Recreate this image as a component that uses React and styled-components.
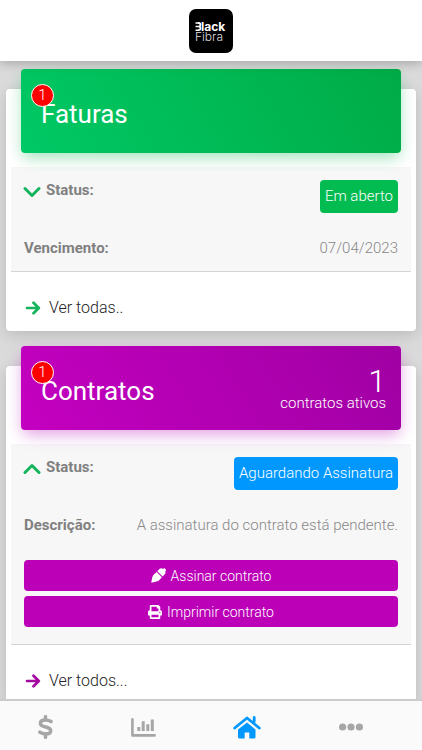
import styled, { createGlobalStyle } from 'styled-components'
import { FaPrint } from 'react-icons/fa'

const GlobalStyle = createGlobalStyle`
  * {
    box-sizing: border-box;
  }
  html, body, #root {
    height: 100%;
    margin: 0;
  }
  body {
    font-family: Roboto, "Liberation Sans", sans-serif;
    font-weight: 300;
    font-size: 15px;
    line-height: 20px;
    color: #888;
  }
  button {
    font: inherit;
    border: none;
    cursor: pointer;
  }
`

const StyledApp = styled.div`
  height: 100%;
  display: flex;
  flex-direction: column;
  background: #dadada;
`

const StyledHeader = styled.header`
  flex: none;
  height: 61px;
  display: flex;
  align-items: center;
  justify-content: center;
  background: white;
  box-shadow: 0 2px 10px rgba(0, 0, 0, 0.25);
  z-index: 1;
`

const StyledLogo = styled.svg`
  width: 44px;
  height: 44px;
  font-family: Inter, Roboto, sans-serif;
`

const StyledMain = styled.main`
  flex: 1;
  min-height: 0;
  overflow: hidden;
  padding: 28px 6px 0;
`

const StyledCard = styled.section`
  background: white;
  border-radius: 4px;
  box-shadow: 0 4px 14px rgba(0, 0, 0, 0.14);
  padding: 0 5px;
  margin-bottom: 35px;
`

const StyledBanner = styled.div`
  position: relative;
  top: -20px;
  height: 84px;
  margin: 0 10px -6px;
  padding: 6px 15px 0 20px;
  display: flex;
  align-items: center;
  justify-content: space-between;
  border-radius: 4px;
  color: white;
  background: linear-gradient(60deg, ${({$from}) => $from}, ${({$to}) => $to});
  box-shadow: 0 6px 16px -2px ${({$glow}) => $glow};
`

const StyledTitle = styled.h2`
  margin: 0;
  font-size: 26px;
  line-height: 32px;
  font-weight: 400;
`

const StyledBadge = styled.span`
  position: absolute;
  top: 15px;
  left: 10px;
  width: 23px;
  height: 23px;
  border: white 1px solid;
  border-radius: 50%;
  background: #fe0000;
  line-height: 21px;
  text-align: center;
`

const StyledCount = styled.div`
  text-align: right;

  strong {
    display: block;
    font-size: 32px;
    line-height: 24px;
    font-weight: 300;
  }
`

const StyledDetails = styled.div`
  padding: 13px 13px;
  background: #f7f7f7;
  border-bottom: #d4d4d4 1px solid;
`

const StyledRow = styled.div`
  display: flex;
  align-items: flex-start;
  justify-content: space-between;
  margin-bottom: ${({$gap}) => $gap || 0}px;
`

const StyledLabel = styled.span`
  display: flex;
  align-items: center;
  font-weight: 700;
  color: #808080;
`

const StyledToggle = styled.button`
  display: flex;
  margin: 4px 5px 0 -1px;
  padding: 0;
  background: none;
  color: #13b45c;
`

const StyledStatus = styled.span`
  padding: 6px 5px 7px;
  border-radius: 4px;
  background: ${({$color}) => $color};
  color: white;
`

const StyledActions = styled.div`
  display: flex;
  flex-direction: column;
  gap: 5px;
  padding-bottom: 4px;
`

const StyledAction = styled.button`
  display: flex;
  align-items: center;
  justify-content: center;
  gap: 5px;
  height: 31px;
  border-radius: 4px;
  background: #bb00b8;
  color: white;
  font-size: 14px;
`

const StyledMore = styled.a`
  display: flex;
  align-items: center;
  gap: 8px;
  padding: 26px 14px 13px;
  color: #222;
  font-size: 16px;
  text-decoration: none;

  svg {
    color: ${({$color}) => $color};
  }
`

const StyledNav = styled.nav`
  flex: none;
  height: 51px;
  display: flex;
  justify-content: space-between;
  padding: 0 14% 0 9%;
  background: #fafafa;
  border-top: #cccccc 2px solid;
  z-index: 1;
`

const StyledTab = styled.button`
  display: flex;
  align-items: center;
  padding: 3px 0 0;
  background: none;
  color: ${({$active}) => $active ? "#0098ff" : "#a6a6a6"};
`

const StyledIcon = styled.svg`
  display: block;
  fill: none;
  stroke: currentColor;
  stroke-width: 3;
  stroke-linecap: round;
  stroke-linejoin: round;
`

const Icon = ({w, h, children}) => (
  <StyledIcon width={w} height={h} viewBox={`0 0 ${w} ${h}`} aria-hidden="true">{children}</StyledIcon>
)

const ChevronDown = () => <Icon w={18} h={12}><path d="M2 2.5l7 7l7-7" /></Icon>

const ChevronUp = () => <Icon w={18} h={12}><path d="M2 9.5l7-7l7 7" /></Icon>

const Arrow = () => <Icon w={16} h={14}><path d="M2 7h11.5M8.5 1.7L13.8 7l-5.3 5.3" strokeWidth="2.7" /></Icon>

const Pen = () => (
  <Icon w={15} h={15}>
    <g fill="currentColor" stroke="none">
      <path d="M0.2 14.8L1.2 9.6Q1.7 7.7 3.1 6.3L5.6 3.9L10.9 9.2L8.4 11.9Q7.2 13.2 5.6 13.6z" />
      <path d="M6.3 3.2L8.4 1.1Q10.4-0.6 12 1Q13.3-0.3 14.5 1Q15.4 2.4 14.2 3.8Q15 5 13.8 6.3L11.6 8.5z" />
    </g>
  </Icon>
)

const Dollar = () => (
  <Icon w={15} h={24}>
    <path d="M13 6.6Q10.3 5 7.5 5Q2.4 5 2.4 8.3Q2.4 11 7.5 12Q12.7 13 12.7 15.8Q12.7 19 7.5 19Q4.3 19 1.8 17.2M7.5 1.7v3M7.5 19.3v3" strokeWidth="3.5" />
  </Icon>
)

const Chart = () => (
  <Icon w={25} h={19}>
    <path d="M1.4 1.4v16h22.2" strokeWidth="2.6" />
    <path d="M7.8 9v4M12.2 3.2v9.8M16.8 6.2v6.8M21.3 1.4v11.6" strokeWidth="3" strokeLinecap="butt" />
  </Icon>
)

const Home = () => (
  <Icon w={28} h={23}>
    <path d="M1.7 12L14 2l12.3 10M21.2 1.5v4" strokeWidth="2.8" />
    <path d="M14 6.5L22.5 13.5V21Q22.5 22.5 21 22.5H16.3V16.5H11.7V22.5H6.5Q5 22.5 5 21V13.5z" fill="currentColor" stroke="none" />
  </Icon>
)

const Dots = () => (
  <Icon w={24} h={8}>
    <g fill="currentColor" stroke="none">
      <circle cx="3.6" cy="4" r="3.6" />
      <circle cx="12" cy="4" r="3.6" />
      <circle cx="20.4" cy="4" r="3.6" />
    </g>
  </Icon>
)

const tabs = [
  {label: "Faturas", TabIcon: Dollar},
  {label: "Consumo", TabIcon: Chart},
  {label: "Início", TabIcon: Home, active: true},
  {label: "Mais", TabIcon: Dots},
]

const Logo = () => (
  <StyledLogo viewBox="0 0 44 44" role="img" aria-label="Black Fibra">
    <rect width="44" height="44" rx="7" fill="black" />
    <path d="M6.5 14h3.5M6.5 17.6h3.5M6.5 21.2h3.5" stroke="white" strokeWidth="1.5" fill="none" />
    <path d="M9 14h0.8a1.6 1.8 0 0 1 0 3.6a1.6 1.8 0 0 1 0 3.6H9" stroke="white" strokeWidth="1.8" fill="none" />
    <text x="12" y="22" fontSize="12" fontWeight="700" fill="white">lack</text>
    <text x="6" y="32" fontSize="12" fontWeight="300" fill="#ddd">Fibra</text>
  </StyledLogo>
)

const Banner = ({title, badge, children, ...colors}) => (
  <StyledBanner {...colors}>
    <StyledTitle>{title}</StyledTitle>
    <StyledBadge>{badge}</StyledBadge>
    {children}
  </StyledBanner>
)

const StatusRow = ({open = false, status, color}) => (
  <StyledRow $gap={25}>
    <StyledLabel>
      <StyledToggle aria-label="Detalhes" aria-expanded={open}>
        {open ? <ChevronUp /> : <ChevronDown />}
      </StyledToggle>
      Status:
    </StyledLabel>
    <StyledStatus $color={color}>{status}</StyledStatus>
  </StyledRow>
)

const App = () => {
  return (
    <StyledApp>
      <GlobalStyle />
      <StyledHeader>
        <Logo />
      </StyledHeader>
      <StyledMain>
        <StyledCard>
          <Banner title="Faturas" badge="1" $from="#00c965" $to="#00ab46" $glow="rgba(0, 180, 80, 0.4)" />
          <StyledDetails>
            <StatusRow status="Em aberto" color="#02bb51" />
            <StyledRow>
              <StyledLabel>Vencimento:</StyledLabel>
              <span>07/04/2023</span>
            </StyledRow>
          </StyledDetails>
          <StyledMore href="#faturas" $color="#13b45c"><Arrow /> Ver todas..</StyledMore>
        </StyledCard>
        <StyledCard>
          <Banner title="Contratos" badge="1" $from="#c400c0" $to="#a000a4" $glow="rgba(180, 0, 180, 0.4)">
            <StyledCount><strong>1</strong>contratos ativos</StyledCount>
          </Banner>
          <StyledDetails>
            <StatusRow open status="Aguardando Assinatura" color="#0098ff" />
            <StyledRow $gap={25}>
              <StyledLabel>Descrição:</StyledLabel>
              <span>A assinatura do contrato está pendente.</span>
            </StyledRow>
            <StyledActions>
              <StyledAction><Pen /> Assinar contrato</StyledAction>
              <StyledAction><FaPrint /> Imprimir contrato</StyledAction>
            </StyledActions>
          </StyledDetails>
          <StyledMore href="#contratos" $color="#a50aa0"><Arrow /> Ver todos...</StyledMore>
        </StyledCard>
      </StyledMain>
      <StyledNav>
        {tabs.map(({label, TabIcon, active}) => (
          <StyledTab key={`tab-${label}`} $active={active} aria-label={label}><TabIcon /></StyledTab>
        ))}
      </StyledNav>
    </StyledApp>
  )
}

export default App
